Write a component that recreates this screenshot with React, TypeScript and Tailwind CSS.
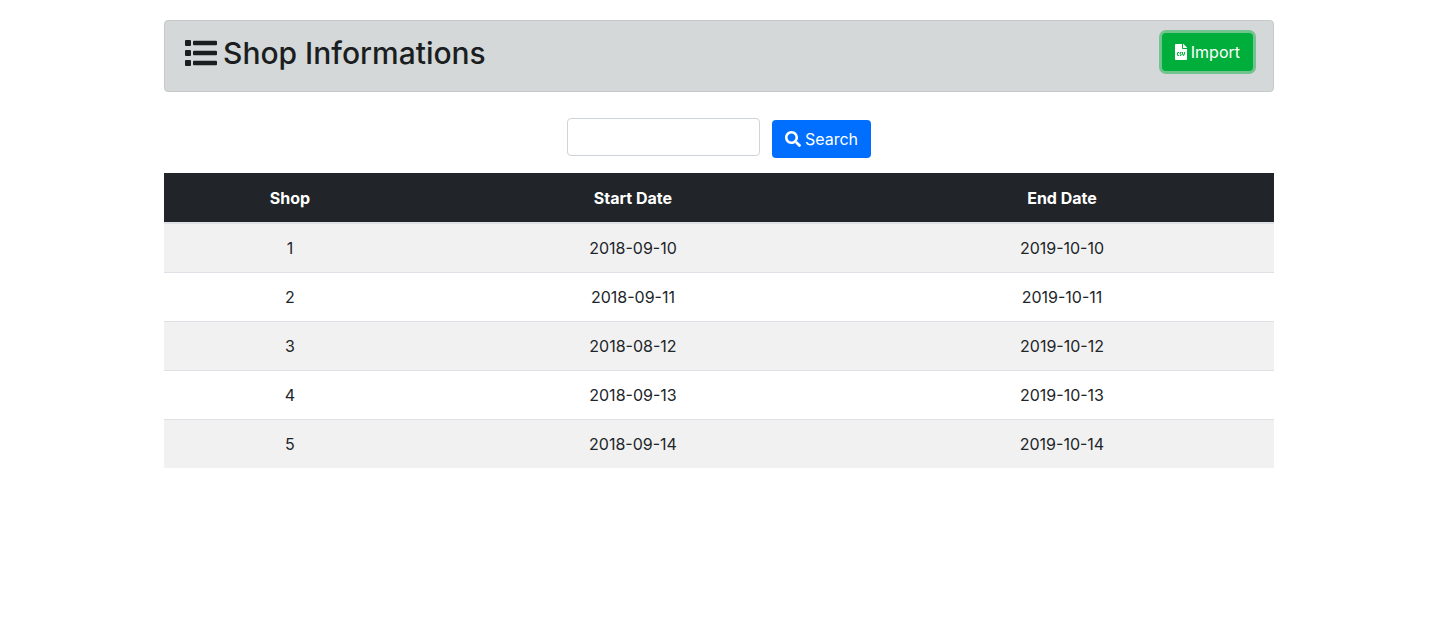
import { FaFileCsv, FaSearch } from "react-icons/fa";

const shops = [
  { id: 1, start: "2018-09-10", end: "2019-10-10" },
  { id: 2, start: "2018-09-11", end: "2019-10-11" },
  { id: 3, start: "2018-08-12", end: "2019-10-12" },
  { id: 4, start: "2018-09-13", end: "2019-10-13" },
  { id: 5, start: "2018-09-14", end: "2019-10-14" },
];

function ListIcon() {
  return (
    <svg viewBox="0 0 512 512" fill="currentColor" aria-hidden="true" className="size-8">
      {[48, 208, 368].map((y) => (
        <g key={y}>
          <rect x="0" y={y} width="96" height="96" rx="16" />
          <rect x="128" y={y + 12} width="384" height="72" rx="16" />
        </g>
      ))}
    </svg>
  );
}

export default function App() {
  return (
    <main className="mx-auto max-w-[1111px] pt-5 pr-px font-['Inter','Liberation_Sans',sans-serif] text-base text-[#212529]">
      <header className="flex items-start justify-between rounded border border-[#c6c8ca] bg-[#d4d8d8] px-5 pt-3 pb-[18px] text-[#1b1e21]">
        <h1 className="flex items-center gap-[6px] text-[30px] leading-10 font-medium">
          <ListIcon />
          Shop Informations
        </h1>
        <button
          type="button"
          className="flex h-[38px] items-center gap-1 rounded bg-[#00ae3b] px-[13px] text-white ring-3 ring-[#0eae46]/50"
        >
          <FaFileCsv aria-hidden="true" preserveAspectRatio="xMidYMid meet" className="h-4 w-3" />
          Import
        </button>
      </header>
      <form
        className="flex items-start justify-center gap-3 pt-[26px] pb-[15px]"
        onSubmit={(event) => event.preventDefault()}
      >
        <input
          type="text"
          aria-label="Search shops"
          className="h-[38px] w-[193px] rounded border border-[#ced4da] px-3 outline-none"
        />
        <button
          type="submit"
          className="mt-[2px] flex h-[38px] items-center gap-1 rounded bg-[#006fff] px-[13px] text-white"
        >
          <FaSearch aria-hidden="true" />
          Search
        </button>
      </form>
      <table className="w-full table-fixed border-collapse text-center">
        <colgroup>
          <col className="w-[22.7%]" />
          <col className="w-[39.1%]" />
          <col className="w-[38.2%]" />
        </colgroup>
        <thead className="bg-[#212529] text-white">
          <tr className="h-[50px] border-b-2 border-[#dee2e6]">
            <th scope="col">Shop</th>
            <th scope="col">Start Date</th>
            <th scope="col">End Date</th>
          </tr>
        </thead>
        <tbody>
          {shops.map((shop) => (
            <tr key={shop.id} className="h-[49px] border-t border-[#dee2e6] odd:bg-[#f1f1f1]">
              <td>{shop.id}</td>
              <td>{shop.start}</td>
              <td>{shop.end}</td>
            </tr>
          ))}
        </tbody>
      </table>
    </main>
  );
}
